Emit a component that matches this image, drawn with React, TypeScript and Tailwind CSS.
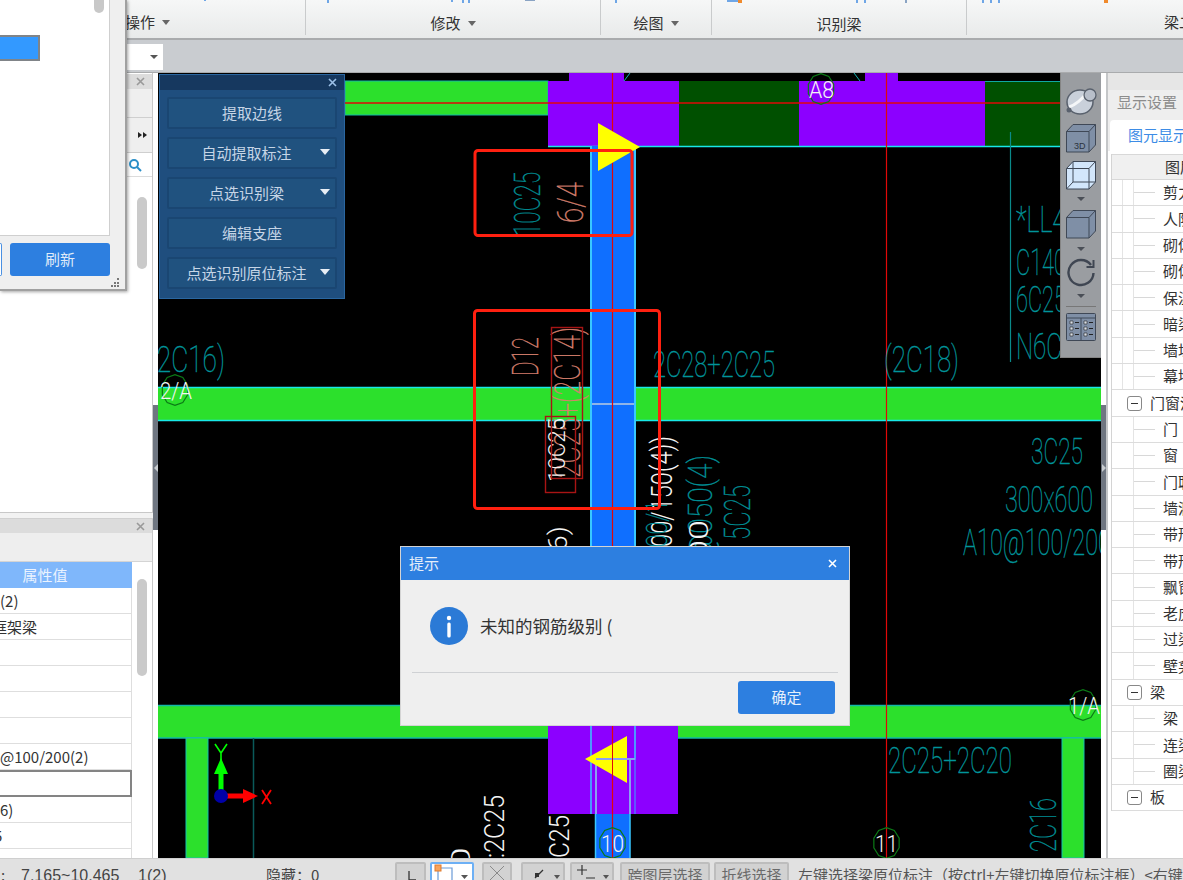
import React from 'react';

const TEAL = '#00949a';
const SALMON = '#d8806f';
const WHITE = '#f4f4f4';

type CadTextProps = { x: number; y: number; len: number; size: number; color: string; up?: boolean; children: string };

function CadText({ x, y, len, size, color, up, children }: CadTextProps) {
  return (
    <text
      x={x}
      y={y}
      fill={color}
      stroke={color === WHITE ? undefined : color}
      strokeWidth={color === WHITE ? undefined : 0.4}
      fontSize={size}
      textLength={len}
      lengthAdjust="spacingAndGlyphs"
      transform={up ? `rotate(-90 ${x} ${y})` : undefined}
      className={`[font-family:Roboto,'Liberation_Sans',sans-serif] ${color === WHITE ? 'font-light' : 'font-thin'}`}
    >
      {children}
    </text>
  );
}

function Octagon({ cx, cy, r }: { cx: number; cy: number; r: number }) {
  const pts = [];
  for (let i = 0; i < 10; i++) {
    const a = (Math.PI * 2 * i) / 10 + Math.PI / 10;
    pts.push(`${cx + Math.cos(a) * r * 0.95},${cy + Math.sin(a) * r * 1.1}`);
  }
  return <polygon points={pts.join(' ')} fill="none" stroke="#0b7a16" strokeWidth="1.2" />;
}

function CadDrawing() {
  return (
    <svg viewBox="158 73 943 785" className="w-[943px] h-[785px] block bg-black">
      {/* top beam row */}
      <rect x="345" y="81" width="203" height="34" fill="#2ce02c" stroke="#12b8a8" />
      <rect x="569" y="73" width="55" height="10" fill="#8c00ff" />
      <rect x="865" y="73" width="33" height="10" fill="#8c00ff" />
      <rect x="548" y="81" width="131" height="65" fill="#8c00ff" />
      <rect x="679" y="81" width="120" height="65" fill="#005000" />
      <rect x="799" y="81" width="186" height="65" fill="#8c00ff" />
      <rect x="985" y="81" width="116" height="65" fill="#005000" />
      <path d="M624 81l6-8M860 81l-6-8" stroke="#14b4b4" fill="none" />
      <path d="M985 81.5H1101" stroke="#10a8a0" />
      <path d="M548 146.5H1101" stroke="#18e8e8" strokeWidth="1.5" />

      {/* horizontal green beams */}
      <rect x="158" y="387" width="943" height="34" fill="#2ce02c" />
      <path d="M158 387.5H596M630 387.5H1101M158 420.5H596M630 420.5H1101" stroke="#18e8e8" strokeWidth="1.5" />
      <rect x="158" y="705" width="943" height="33" fill="#2ce02c" />
      <path d="M158 705.5H1101M158 738H1101" stroke="#12b8a8" strokeWidth="1.5" />
      <rect x="186" y="738" width="22" height="120" fill="#2ce02c" stroke="#14c0b0" />
      <path d="M253.5 738V858" stroke="#0a5a5a" strokeWidth="1.5" />
      <rect x="1062" y="738" width="22" height="120" fill="#2ce02c" stroke="#14c0b0" />

      {/* blue column */}
      <rect x="590" y="146" width="46" height="420" fill="#0f6fff" />
      <path d="M591 146V566M635 146V566" stroke="#38c8ff" strokeWidth="2" />
      <path d="M592 404H634" stroke="#8fb4e8" strokeWidth="2" />

      <rect x="548" y="726" width="130" height="88" fill="#8c00ff" />
      <rect x="595" y="814" width="35" height="44" fill="#0f6fff" />
      <path d="M595.5 814V858M630 814V858" stroke="#38c8ff" strokeWidth="1.5" />
      <path d="M591 726V814M635 726V759H596" stroke="#38c8ff" strokeWidth="1.5" fill="none" />
      <path d="M596 759V814M630 759V814M596 759H635" stroke="#8aa0f0" strokeWidth="2" fill="none" />
      <path d="M635 759V814" stroke="#38a8ff" strokeWidth="1" />

      {/* axis lines */}
      <path d="M345 103H1101" stroke="#e00808" strokeWidth="1.5" />
      <path d="M612.5 73V858M886.5 73V858" stroke="#e00808" strokeWidth="1.2" />

      {/* markers */}
      <polygon points="598,123 640,147 598,171" fill="#ffff00" />
      <polygon points="627,736 585,759 627,783" fill="#ffff00" />
      <path d="M596 759H635" stroke="#8aa0f0" strokeWidth="2" />
      <path d="M612.5 736V790" stroke="#e00808" strokeWidth="1" />

      {/* grid bubbles */}
      <Octagon cx={821} cy={89} r={14} />
      <CadText x={809} y={98} len={25} size={23} color={WHITE}>A8</CadText>
      <Octagon cx={612.5} cy={843} r={14} />
      <CadText x={601} y={852} len={23} size={23} color={WHITE}>10</CadText>
      <Octagon cx={886.5} cy={843} r={14} />
      <CadText x={875} y={852} len={23} size={23} color={WHITE}>11</CadText>
      <Octagon cx={175} cy={390} r={14} />
      <CadText x={160} y={399} len={32} size={24} color={WHITE}>2/A</CadText>
      <Octagon cx={1083} cy={705} r={14} />
      <CadText x={1068} y={714} len={32} size={24} color={WHITE}>1/A</CadText>

      {/* annotation texts */}
      <CadText x={540} y={236} len={64} size={36} color={TEAL} up>10C25</CadText>
      <CadText x={583} y={223} len={41} size={36} color={SALMON} up>6/4</CadText>
      <CadText x={538} y={376} len={39} size={36} color={SALMON} up>D12</CadText>
      <CadText x={580} y={478} len={151} size={36} color={SALMON} up>2C25+(2C14)</CadText>
      <CadText x={565} y={482} len={64} size={24} color={WHITE} up>10C25</CadText>
      <rect x="551.5" y="327.5" width="31" height="151" fill="none" stroke="#a81414" strokeWidth="1.4" />
      <rect x="545.5" y="416.5" width="30" height="76" fill="none" stroke="#a81414" strokeWidth="1.4" />

      <CadText x={653} y={377} len={122} size={36} color={TEAL}>2C28+2C25</CadText>
      <CadText x={884} y={372} len={75} size={36} color={TEAL}>(2C18)</CadText>
      <CadText x={149} y={372} len={76} size={36} color={TEAL}>(2C16)</CadText>
      <CadText x={1031} y={464} len={52} size={36} color={TEAL}>3C25</CadText>
      <CadText x={1005} y={512} len={88} size={36} color={TEAL}>300x600</CadText>
      <CadText x={963} y={555} len={148} size={36} color={TEAL}>A10@100/200</CadText>
      <CadText x={1016} y={232} len={50} size={36} color={TEAL}>*LL4</CadText>
      <CadText x={1016} y={275} len={50} size={36} color={TEAL}>C140</CadText>
      <CadText x={1016} y={312} len={50} size={36} color={TEAL}>6C25</CadText>
      <CadText x={1016} y={359} len={46} size={36} color={TEAL}>N6C</CadText>
      <path d="M1010.5 132V362" stroke="#0a8a8a" strokeWidth="1.2" />

      <CadText x={672} y={560} len={124} size={30} color={WHITE} up>100/150(4))</CadText>
      <CadText x={667} y={560} len={60} size={30} color={TEAL} up>100/1</CadText>
      <CadText x={712} y={560} len={105} size={34} color={TEAL} up>@050(4)</CadText>
      <CadText x={708} y={560} len={40} size={26} color={WHITE} up>00</CadText>
      <CadText x={750} y={540} len={55} size={36} color={TEAL} up>5C25</CadText>
      <CadText x={567} y={560} len={34} size={26} color={WHITE} up>(6)</CadText>

      <CadText x={504} y={858} len={63} size={28} color={WHITE} up>:2C25</CadText>
      <CadText x={569} y={858} len={43} size={28} color={WHITE} up>C25</CadText>
      <CadText x={470} y={870} len={23} size={26} color={WHITE} up>0</CadText>

      <CadText x={888} y={773} len={124} size={36} color={TEAL}>2C25+2C20</CadText>
      <CadText x={1056} y={852} len={54} size={36} color={TEAL} up>2C16</CadText>

      {/* review boxes */}
      <rect x="475" y="150.5" width="157" height="85" rx="3" fill="none" stroke="#ff2010" strokeWidth="3" />
      <rect x="474.5" y="310.5" width="185" height="198" rx="3" fill="none" stroke="#ff2010" strokeWidth="3" />

      {/* UCS */}
      <path d="M221 796V773" stroke="#00ff00" strokeWidth="5" />
      <polygon points="221,758 228,774 214,774" fill="#00ff00" />
      <path d="M221 796H244" stroke="#ff0000" strokeWidth="5" />
      <polygon points="258,796 243,789 243,803" fill="#ff0000" />
      <circle cx="221" cy="796" r="7" fill="#0000a8" />
      <path d="M215 744l6 9 6-9M221 753v7" stroke="#00ff00" strokeWidth="1.6" fill="none" />
      <path d="M262 790l9 14M271 790l-9 14" stroke="#ff0000" strokeWidth="1.8" fill="none" />
    </svg>
  );
}

function RibbonLabel({ text, arrow = true }: { text: string; arrow?: boolean }) {
  return (
    <span className="flex items-center gap-[7px] text-[15px] text-[#333]">
      {text}
      {arrow && <span className="w-0 h-0 border-x-[4.5px] border-x-transparent border-t-[5px] border-t-[#666]" />}
    </span>
  );
}

function Ribbon() {
  return (
    <div className="relative h-[40px] shrink-0 flex bg-gradient-to-b from-[#f6f7f7] to-[#e8eaea] border-b-[2px] border-[#a9abad]">
      {/* bottoms of the ribbon's icons, cut off by the top of the shot */}
      <svg width="1183" height="5" viewBox="0 0 1183 5" className="absolute left-0 top-0">
        <path d="M204 0h2v1h-2zM327 0h2v3h-2zM451 0h2v2h-2zM462 0h2v3h-2zM468 0h2v3h-2zM615 0h2v3h-2zM856 0h2v3h-2zM864 0h2v3h-2zM982 0h2v3h-2zM990 0h2v3h-2zM998 0h2v3h-2zM727 0h12v2h-12z" fill="#6fa6e6" />
        <path d="M525 0h10v1h-10zM905 0h2v3h-2z" fill="#8aa4c4" />
        <path d="M738 0h4v3h-4zM1104 0h4v3h-4z" fill="#f08a2c" />
      </svg>
      <div className="w-[306px] shrink-0 pl-[125px] pt-[11px] border-r border-[#c9cbcc] mb-[3px]"><RibbonLabel text="操作" /></div>
      <div className="w-[295px] shrink-0 flex justify-center pt-[11px] border-r border-[#c9cbcc] mb-[3px]"><RibbonLabel text="修改" /></div>
      <div className="w-[111px] shrink-0 flex justify-center pt-[11px] border-r border-[#c9cbcc] mb-[3px]"><RibbonLabel text="绘图" /></div>
      <div className="w-[255px] shrink-0 flex justify-center pt-[14px] border-r border-[#c9cbcc] mb-[3px]"><RibbonLabel text="识别梁" arrow={false} /></div>
      <div className="flex-1 min-w-0 overflow-hidden pl-[197px] pt-[11px] whitespace-nowrap"><RibbonLabel text="梁二次编辑" arrow={false} /></div>
    </div>
  );
}

function FloatingWindow() {
  return (
    <div className="absolute left-0 top-0 w-[127px] h-[291px] z-30 bg-[#efefef] border-r-2 border-b-2 border-[#a0a0a0] shadow-[1px_1px_3px_rgba(0,0,0,0.35)] flex flex-col">
      <div className="h-[236px] mr-[15px] bg-white border-r border-b border-[#cfcfcf] flex flex-col">
        <div className="flex justify-end pr-[5px]">
          <div className="w-[10px] h-[13px] bg-[#c8c8c8] rounded-b-full" />
        </div>
        <div className="mt-[22px] w-[40px] h-[26px] bg-[#3399ff] border-y-2 border-r-2 border-[#808488]" />
      </div>
      <div className="flex mt-[7px] h-[33px]">
        <div className="w-[2px] border-y border-r border-[#4a90e2] bg-white rounded-r-[3px]" />
        <button type="button" className="ml-[8px] w-[100px] rounded-[3px] bg-[#2d7fe0] text-[15px] text-[#dfeaf8]">刷新</button>
      </div>
      <div className="mt-[2px] mr-[5px] flex justify-end">
        <svg width="10" height="10" viewBox="0 0 10 10"><path d="M7 0h2v2H7zM4 4h2v2H4zM7 4h2v2H7zM1 7h2v2H1zM4 7h2v2H4zM7 7h2v2H7z" fill="#777" /></svg>
      </div>
    </div>
  );
}

function ClosingX({ className = 'stroke-[#999]' }: { className?: string }) {
  return (
    <svg width="9" height="9" viewBox="0 0 9 9" className={className} fill="none" strokeWidth="1.6">
      <path d="M1 1l7 7M8 1L1 8" />
    </svg>
  );
}

const PROPERTY_ROWS = ['(2)', '框架梁', '', '', '', '', '@100/200(2)', '', '6)', '5', ''];

function LeftColumn() {
  return (
    <div className="w-[153px] shrink-0 flex flex-col bg-[#e8e8e8]">
      <div className="h-[440px] bg-white border-r border-[#c8c8c8] border-b flex flex-col">
        <div className="h-[15px] mt-[1px] bg-[#dcdcdc] flex items-center justify-end pr-[7px]"><ClosingX /></div>
        <div className="h-[29px] bg-[#efefef] border-b border-[#cfcfcf]" />
        <div className="h-[35px] bg-[#efefef] border-b border-[#cfcfcf] flex items-center justify-end pr-[5px]">
          <span className="flex">
            <span className="w-0 h-0 border-y-[3.5px] border-y-transparent border-l-[4px] border-l-[#222]" />
            <span className="ml-[1px] w-0 h-0 border-y-[3.5px] border-y-transparent border-l-[4px] border-l-[#222]" />
          </span>
        </div>
        <div className="h-[24px] border-b border-[#dcdcdc] flex items-center justify-end pr-[10px]">
          <svg width="14" height="14" viewBox="0 0 14 14" fill="none" stroke="#2b8fc8" strokeWidth="2"><circle cx="6" cy="6" r="4" /><path d="M9 9l4 4" /></svg>
        </div>
        <div className="flex-1 flex justify-end pr-[5px]">
          <div className="mt-[20px] w-[10px] h-[72px] rounded-full bg-[#cacaca]" />
        </div>
      </div>
      <div className="h-[6px] bg-[#f2f2f2] border-b border-[#d0d0d0]" />
      <div className="flex-1 flex flex-col border-r border-[#c8c8c8] overflow-hidden">
        <div className="h-[14px] bg-[#dcdcdc] flex items-center justify-end pr-[7px] shrink-0"><ClosingX /></div>
        <div className="h-[29px] bg-[#eeeeee] border-b border-[#d4d4d4] shrink-0" />
        <div className="flex-1 flex bg-white">
          <div className="w-[132px] flex flex-col">
            <div className="h-[26px] bg-[#7fb7fb] text-[#eaf3ff] text-[15px] leading-[26px] text-center shrink-0">
              <span className="block w-[90px]">属性值</span>
            </div>
            {PROPERTY_ROWS.map((row, i) =>
              i === 7 ? (
                <div key={i} className="h-[27px] bg-white border-2 border-l-0 border-[#848484] shrink-0" />
              ) : (
                <div key={i} className="h-[26px] border-b border-r border-[#dedede] shrink-0 text-[15px] leading-[26px] text-[#333] whitespace-nowrap overflow-hidden">
                  <span className={i === 1 ? 'block -ml-[8px]' : i === 9 ? 'block -ml-[6px]' : 'block'}>{row}</span>
                </div>
              )
            )}
          </div>
          <div className="flex-1 flex justify-center">
            <div className="mt-[17px] w-[10px] h-[97px] rounded-full bg-[#cacaca]" />
          </div>
        </div>
      </div>
    </div>
  );
}

function Gutter({ side }: { side: 'left' | 'right' }) {
  return (
    <div className="w-[5px] shrink-0 bg-white flex flex-col">
      <div className="h-[332px]" />
      <div className="w-[5px] h-[125px] bg-[#6f7681] flex items-center justify-center">
        {side === 'left' ? (
          <span className="w-0 h-0 border-y-[4px] border-y-transparent border-r-[4px] border-r-[#c8ccd0]" />
        ) : (
          <span className="w-0 h-0 border-y-[4px] border-y-transparent border-l-[4px] border-l-[#c8ccd0]" />
        )}
      </div>
    </div>
  );
}

const DARK_BUTTONS: { label: string; menu?: boolean }[] = [
  { label: '提取边线' },
  { label: '自动提取标注', menu: true },
  { label: '点选识别梁', menu: true },
  { label: '编辑支座' },
  { label: '点选识别原位标注', menu: true },
];

function BeamPanel() {
  return (
    <div className="absolute left-[1px] top-[1px] w-[186px] h-[225px] bg-[#1f4e7e] border border-[#2a66a0] z-10 flex flex-col">
      <div className="h-[15px] bg-[#16385f] flex items-center justify-end pr-[7px] shrink-0"><ClosingX className="stroke-[#9cc0e8]" /></div>
      <div className="px-[7px] pt-[7px] flex flex-col gap-[8px]">
        {DARK_BUTTONS.map((b) => (
          <div
            key={b.label}
            className={`relative h-[32px] rounded-[2px] border-2 border-[#1a4672] bg-[#20527f] text-[15px] leading-[28px] text-center text-[#c6d5e6] ${b.menu ? 'pr-[11px]' : ''}`}
          >
            {b.label}
            {b.menu && <span className="absolute right-[5px] top-[10px] w-0 h-0 border-x-[5px] border-x-transparent border-t-[6px] border-t-[#e8eef5]" />}
          </div>
        ))}
      </div>
    </div>
  );
}

function ViewToolbar() {
  const body = '#7f8fa6';
  return (
    <div className="absolute right-0 top-0 w-[41px] h-[285px] bg-[#9a9da1] border-b border-l border-[#858585] z-10 flex flex-col items-center pt-[14px]">
      <svg width="32" height="28" viewBox="0 0 32 28">
        <ellipse cx="15" cy="15" rx="13" ry="12" fill="#c9d0da" stroke="#59616d" strokeWidth="1.5" />
        <path d="M4 20c6-2 14-8 18-15" stroke="#f4f6f8" strokeWidth="3" fill="none" />
        <circle cx="25" cy="8" r="6" fill="#b8bfca" stroke="#59616d" strokeWidth="1.3" />
        <circle cx="4" cy="23" r="2.5" fill="#59616d" />
      </svg>
      <svg width="32" height="30" viewBox="0 0 32 30" className="mt-[8px]">
        <path d="M1.5 8.5L8 1.5H30.5V22L24 29H1.5Z" fill={body} stroke="#3f4856" />
        <path d="M1.5 8.5H24V29M24 8.5L30.5 1.5" fill="none" stroke="#3f4856" />
        <text x="9" y="26" fontSize="9" fill="#2b3340" className="[font-family:'Liberation_Sans',sans-serif]">3D</text>
      </svg>
      <svg width="32" height="30" viewBox="0 0 32 30" className="mt-[7px]">
        <path d="M1.5 8.5L8 1.5H30.5V22L24 29H1.5Z" fill="#d2e6fb" stroke="#3f4856" />
        <path d="M1.5 8.5H24V29M24 8.5L30.5 1.5M8 1.5V22H30.5M8 22L1.5 29" fill="none" stroke="#3f4856" />
      </svg>
      <span className="mt-[7px] w-0 h-0 border-x-[4px] border-x-transparent border-t-[4px] border-t-[#4a4f57]" />
      <svg width="32" height="30" viewBox="0 0 32 30" className="mt-[8px]">
        <path d="M1.5 8.5L8 1.5H30.5V22L24 29H1.5Z" fill={body} stroke="#3f4856" />
        <path d="M1.5 8.5H24V29M24 8.5L30.5 1.5" fill="none" stroke="#3f4856" />
      </svg>
      <span className="mt-[8px] w-0 h-0 border-x-[4px] border-x-transparent border-t-[4px] border-t-[#4a4f57]" />
      <svg width="30" height="30" viewBox="0 0 30 30" className="mt-[6px]" fill="none" stroke="#3f4652" strokeWidth="2.4">
        <path d="M25 8A12.5 12.5 0 1 0 27.5 16" />
        <path d="M27.5 3V10H20.5" strokeWidth="2" />
      </svg>
      <span className="mt-[7px] w-0 h-0 border-x-[4px] border-x-transparent border-t-[4px] border-t-[#4a4f57]" />
      <div className="mt-[8px] w-[30px] h-px bg-[#777]" />
      <svg width="30" height="30" viewBox="0 0 30 30" className="mt-[5px]">
        <rect x="0.5" y="1.5" width="29" height="27" rx="1" fill="#7f8fa6" stroke="#3f4856" />
        <path d="M1 6H29" stroke="#3f4856" />
        <path d="M15 6V28" stroke="#3f4856" />
        <path d="M4 9h3v3H4zM4 15h3v3H4zM4 21h3v3H4zM18 9h3v3h-3zM18 15h3v3h-3zM18 21h3v3h-3z" fill="#d8dee6" stroke="#222" strokeWidth="0.6" />
        <path d="M9 10.5h4M9 16.5h4M9 22.5h4M23 10.5h4M23 16.5h4M23 22.5h4" stroke="#222" />
      </svg>
    </div>
  );
}

function NoticeDialog() {
  return (
    <div className="absolute left-[242px] top-[473px] w-[450px] h-[180px] z-20 bg-[#efefef] border border-[#d4d4d4] flex flex-col">
      <div className="h-[33px] bg-[#2d7fe0] flex items-center justify-between pl-[8px] pr-[12px] shrink-0">
        <span className="text-[15px] text-[#e4eefa]">提示</span>
        <ClosingX className="stroke-white" />
      </div>
      <div className="flex items-center pl-[29px] pt-[27px]">
        <svg width="38" height="38" viewBox="0 0 38 38">
          <circle cx="19" cy="19" r="19" fill="#2b7ad6" />
          <circle cx="19" cy="11" r="2.2" fill="#fff" />
          <rect x="17.3" y="15.5" width="3.4" height="15" rx="1.5" fill="#fff" />
        </svg>
        <span className="ml-[12px] text-[17.5px] text-[#333] whitespace-pre">未知的钢筋级别 (</span>
      </div>
      <div className="mt-[27px] mx-[11px] h-px bg-[#cfd1d4]" />
      <div className="flex justify-end pr-[14px] pt-[8px]">
        <button type="button" className="w-[97px] h-[33px] rounded-[3px] bg-[#2d7fe0] text-[15px] text-[#e6f0fb]">确定</button>
      </div>
    </div>
  );
}

type TreeRow = { label: string; group?: boolean };

const TREE: TreeRow[] = [
  { label: '剪力墙' }, { label: '人防门框墙' }, { label: '砌体墙' }, { label: '砌体加筋' },
  { label: '保温层' }, { label: '暗梁' }, { label: '墙垛' }, { label: '幕墙' },
  { label: '门窗洞', group: true },
  { label: '门' }, { label: '窗' }, { label: '门联窗' }, { label: '墙洞' }, { label: '带形窗' },
  { label: '带形洞' }, { label: '飘窗' }, { label: '老虎窗' }, { label: '过梁' }, { label: '壁龛' },
  { label: '梁', group: true },
  { label: '梁' }, { label: '连梁' }, { label: '圈梁' },
  { label: '板', group: true },
];

function RightPanel() {
  return (
    <div className="w-[77px] shrink-0 min-w-0 bg-white border-l-2 border-[#c4c6c8] overflow-hidden flex flex-col whitespace-nowrap">
      <div className="h-[17px] bg-[#e6e6e6] shrink-0" />
      <div className="h-[30px] bg-[#eeeeee] pl-[9px] text-[15px] leading-[24px] text-[#8c8c8c] shrink-0 w-[200px]">显示设置</div>
      <div className="h-[31px] bg-[#eeeeee] pl-[2px] shrink-0 w-[200px]">
        <div className="h-[31px] bg-white rounded-tl-[4px] pl-[18px] text-[15px] leading-[30px] text-[#3d8ce6]">图元显示</div>
      </div>
      <div className="ml-[3px] mt-[3px] border-l border-[#d4d4d4] flex flex-col w-[200px]">
        <div className="h-[26px] bg-[#f0f0f0] border-y border-[#d8d8d8] pl-[53px] text-[15px] leading-[24px] text-[#333] shrink-0">图层管理</div>
        {TREE.map((row, i) => (
          <div key={i} className="h-[26.3px] border-b border-[#dcdcdc] flex items-center shrink-0 text-[15px] text-[#333]">
            {row.group ? (
              <>
                <span className="ml-[15px] w-[15px] h-[15px] shrink-0 border border-[#888] rounded-[3px] flex items-center justify-center">
                  <span className="w-[7px] h-px bg-[#333]" />
                </span>
                <span className="ml-[8px]">{row.label}</span>
              </>
            ) : (
              <>
                <span className={`w-[11px] h-full shrink-0 ${i < 8 ? 'border-r border-[#e4e4e4]' : ''}`} />
                <span className="w-[11px] h-full shrink-0 border-r border-[#e4e4e4]" />
                <span className="w-[21px] h-px shrink-0 bg-[#d8d8d8]" />
                <span className="ml-[8px]">{row.label}</span>
              </>
            )}
          </div>
        ))}
      </div>
    </div>
  );
}

function StatusButton({ width, margin, children, selected }: { width: string; margin: string; children?: React.ReactNode; selected?: boolean }) {
  return (
    <div
      className={`${width} ${margin} h-[24px] shrink-0 rounded-t-[2px] border-2 flex items-start justify-center overflow-hidden text-[15px] text-[#6a6a6a] ${
        selected ? 'bg-white border-[#6db0f5]' : 'bg-[#d2d2d2] border-[#bdbdbd]'
      }`}
    >
      {children}
    </div>
  );
}

function StatusBar() {
  return (
    <div className="h-[22px] shrink-0 bg-[#e1e1e1] border-t border-[#cfcfcf] flex items-start overflow-hidden whitespace-nowrap relative z-40 text-[15px] text-[#444]">
      <span className="w-[21px] shrink-0 pt-[5px] pl-[1px]">:</span>
      <span className="w-[117px] shrink-0 pt-[5px] text-[16px] [font-family:'Liberation_Sans',sans-serif]">7.165~10.465</span>
      <span className="w-[128px] shrink-0 pt-[5px] text-[16px] [font-family:'Liberation_Sans',sans-serif]">1(2)</span>
      <span className="w-[129px] shrink-0 pt-[5px]">隐藏：0</span>
      <div className="flex pt-[3px] shrink-0">
        <StatusButton width="w-[31px]" margin="">
          <svg width="16" height="16" viewBox="0 0 16 16" fill="none" stroke="#333" strokeWidth="1.3" className="mt-[3px]"><path d="M6 4v9h7" /></svg>
        </StatusButton>
        <StatusButton width="w-[44px]" margin="ml-[4px]" selected>
          <svg width="40" height="16" viewBox="0 0 40 16" fill="none">
            <path d="M6 4H20V16M6 4V16" stroke="#6a9bd8" strokeWidth="1.2" />
            <rect x="3" y="1" width="6" height="6" fill="#f7a35c" stroke="#e07b2c" />
            <path d="M29 11h7l-3.5 4z" fill="#555" />
          </svg>
        </StatusButton>
        <StatusButton width="w-[30px]" margin="ml-[8px]">
          <svg width="20" height="16" viewBox="0 0 20 16" fill="none" stroke="#8a8a8a" className="mt-[1px]"><path d="M3 1l14 14M17 1L3 15" /></svg>
        </StatusButton>
        <StatusButton width="w-[44px]" margin="ml-[9px]">
          <svg width="40" height="16" viewBox="0 0 40 16" fill="none">
            <path d="M12 14l8-8" stroke="#333" strokeWidth="1.3" />
            <rect x="12" y="9" width="4" height="4" fill="#333" />
            <path d="M31 11h6l-3 4z" fill="#555" />
          </svg>
        </StatusButton>
        <StatusButton width="w-[44px]" margin="ml-[5px]">
          <svg width="40" height="16" viewBox="0 0 40 16" fill="none">
            <path d="M5 6h10M10 1v10M14 14h9" stroke="#333" strokeWidth="1.2" />
            <path d="M31 11h6l-3 4z" fill="#555" />
          </svg>
        </StatusButton>
        <StatusButton width="w-[90px]" margin="ml-[6px]"><span>跨图层选择</span></StatusButton>
        <StatusButton width="w-[75px]" margin="ml-[4px]"><span>折线选择</span></StatusButton>
      </div>
      <span className="ml-[9px] pt-[5px] text-[15px] text-[#555] shrink-0">左键选择梁原位标注（按ctrl+左键切换原位标注框）&lt;右键确认选择</span>
    </div>
  );
}

export default function App() {
  return (
    <div className="relative w-[1183px] h-[880px] overflow-hidden flex flex-col bg-[#e8e8e8] [font-family:'Noto_Sans_CJK_SC','Liberation_Sans',sans-serif]">
      <FloatingWindow />
      <Ribbon />
      <div className="h-[33px] shrink-0 bg-[#c9ccd0] pl-[126px] pt-[4px] border-b border-[#a9abad]">
        <div className="w-[37px] h-[26px] bg-white flex items-center justify-end pr-[5px]">
          <span className="w-0 h-0 border-x-[4px] border-x-transparent border-t-[4px] border-t-[#555]" />
        </div>
      </div>
      <div className="flex-1 flex min-h-0">
        <LeftColumn />
        <Gutter side="left" />
        <div className="relative w-[943px] shrink-0">
          <CadDrawing />
          <BeamPanel />
          <ViewToolbar />
          <NoticeDialog />
        </div>
        <Gutter side="right" />
        <RightPanel />
      </div>
      <StatusBar />
    </div>
  );
}
